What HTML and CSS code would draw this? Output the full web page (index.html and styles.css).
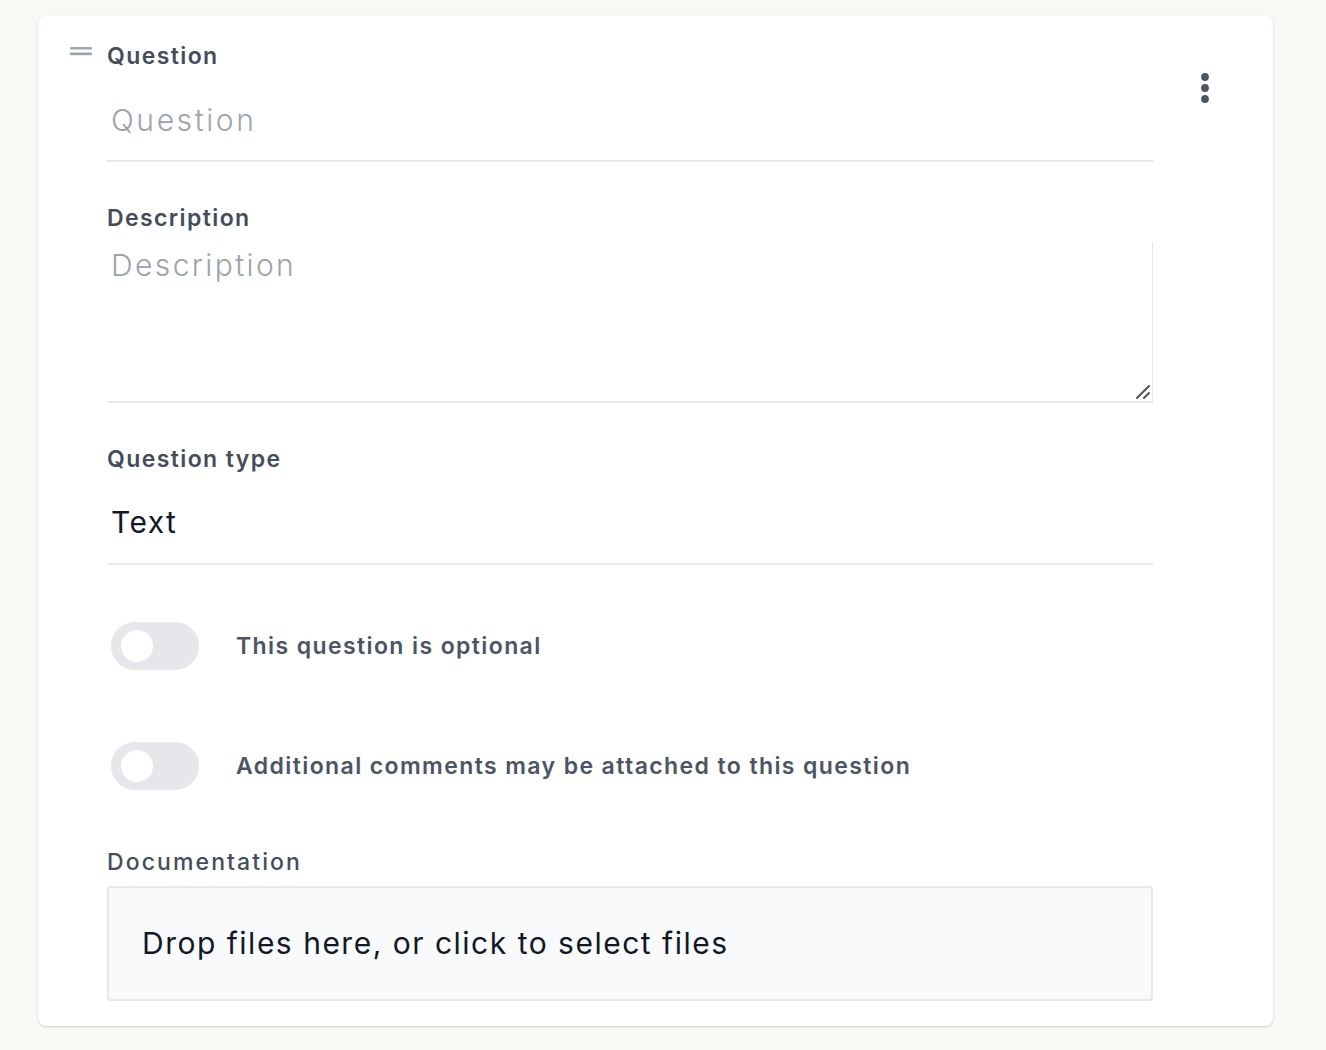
FILE: index.html
```html
<!DOCTYPE html>
<html lang="en">
<head>
<meta charset="utf-8">
<title>Question editor</title>
<link rel="stylesheet" href="styles.css">
</head>
<body>
<div class="page">
  <div class="card">
    <div class="handle-col">
      <svg class="handle" width="22" height="10" viewBox="0 0 22 10"><rect x="0" y="1" width="22" height="2.6" rx="1.3"/><rect x="0" y="6.6" width="22" height="2.6" rx="1.3"/></svg>
    </div>
    <div class="main">
      <label class="label">Question</label>
      <input class="line-input q-input" type="text" placeholder="Question">
      <label class="label gap-lg">Description</label>
      <div class="area-wrap">
        <textarea class="area" placeholder="Description"></textarea>
        <svg class="grip" width="16" height="16" viewBox="0 0 16 16"><line x1="2" y1="14" x2="14" y2="2"/><line x1="9" y1="14" x2="14" y2="9"/></svg>
      </div>
      <label class="label gap-lg">Question type</label>
      <div class="select-line">Text</div>
      <div class="toggle-row first">
        <span class="toggle"><span class="knob"></span></span>
        <span class="toggle-text">This question is optional</span>
      </div>
      <div class="toggle-row second">
        <span class="toggle"><span class="knob"></span></span>
        <span class="toggle-text">Additional comments may be attached to this question</span>
      </div>
      <label class="label doc-label">Documentation</label>
      <div class="dropzone">Drop files here, or click to select files</div>
    </div>
    <div class="menu-col">
      <svg class="kebab" width="10" height="30" viewBox="0 0 10 30"><circle cx="5" cy="4" r="3.9"/><circle cx="5" cy="15" r="3.9"/><circle cx="5" cy="26" r="3.9"/></svg>
    </div>
  </div>
</div>
</body>
</html>
```
FILE: styles.css
```css
* { box-sizing: border-box; }
html, body { margin: 0; padding: 0; }
body {
  background: #f9f8f4;
  font-family: "Inter", "Noto Sans", sans-serif;
  width: 1326px;
  height: 1050px;
  overflow: hidden;
}
.page { padding: 16px 0 0 38px; }
.card {
  width: 1235px;
  height: 1010px;
  background: #ffffff;
  border-radius: 8px;
  box-shadow: 0 1px 3px rgba(0,0,0,0.12), 0 1px 2px rgba(0,0,0,0.06);
  display: flex;
  padding: 25px 0 25px 32px;
}
.handle-col { width: 37px; padding-top: 5px; }
.handle { fill: #9ca3af; display: block; }
.main { width: 1046px; display: flex; flex-direction: column; }
.menu-col { padding: 32px 0 0 47px; }
.kebab { fill: #4b5563; display: block; }
.label {
  display: block;
  font-size: 23px;
  line-height: 30px;
  font-weight: 600;
  color: #454d5b;
  letter-spacing: 1.4px;
}
.gap-lg { margin-top: 41px; }
.line-input {
  display: block;
  width: 100%;
  border: 0;
  border-bottom: 2px solid #e5e7eb;
  outline: none;
  font-family: inherit;
  font-size: 30px;
  font-weight: 300;
  color: #111827;
  padding: 29px 4px 20px;
  line-height: 40px;
  height: 91px;
  letter-spacing: 2.6px;
  background: transparent;
}
.line-input::placeholder { color: #9ca3af; }
.area-wrap { position: relative; margin-top: 9px; }
.area {
  display: block;
  width: 100%;
  height: 161px;
  border: 0;
  border-right: 1px solid #e5e7eb;
  border-bottom: 2px solid #e5e7eb;
  outline: none;
  resize: none;
  font-family: inherit;
  font-size: 30px;
  font-weight: 300;
  line-height: 36px;
  padding: 5px 4px;
  letter-spacing: 2.4px;
  color: #111827;
}
.area::placeholder { color: #9ca3af; }
.grip {
  position: absolute;
  right: 2px;
  bottom: 3px;
  stroke: #4b515c;
  stroke-width: 2;
  stroke-linecap: round;
}
.select-line {
  font-size: 30px;
  font-weight: 400;
  line-height: 40px;
  color: #111827;
  padding: 28px 4px 21px;
  border-bottom: 2px solid #e5e7eb;
  letter-spacing: 1.4px;
}
.toggle-row { display: flex; align-items: center; gap: 37px; padding-left: 4px; }
.toggle-row.first { margin-top: 57px; }
.toggle-row.second { margin-top: 72px; }
.toggle {
  width: 88px;
  height: 48px;
  border-radius: 24px;
  background: #e5e7eb;
  display: flex;
  align-items: center;
  padding-left: 10px;
  flex: none;
}
.knob { width: 32px; height: 32px; border-radius: 50%; background: #ffffff; }
.toggle-text {
  font-size: 23px;
  font-weight: 600;
  color: #4b5563;
  letter-spacing: 1.4px;
}
.doc-label { margin-top: 57px; font-weight: 500; letter-spacing: 2.1px; }
.dropzone {
  margin-top: 9px;
  height: 116px;
  background: #f9fafb;
  border: 2px solid #e5e7eb;
  border-radius: 4px;
  display: flex;
  align-items: center;
  padding-left: 33px;
  font-size: 30px;
  color: #111827;
  letter-spacing: 1.5px;
}
```
